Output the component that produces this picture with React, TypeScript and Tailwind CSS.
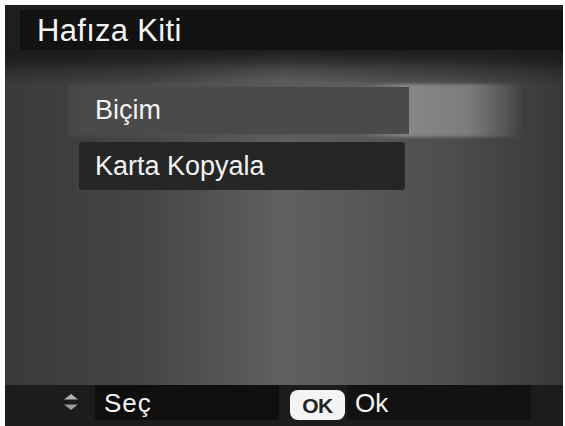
import React from "react";

const font = { fontFamily: '"Liberation Sans", Arial, sans-serif' };

function UpDownIcon() {
  return (
    <svg width="18" height="22" viewBox="0 0 18 22" className="blur-[0.6px]">
      <path d="M2 8.5 L9 3 L16 8.5 Z" fill="#b4b4b4" />
      <path d="M2 13.5 L16 13.5 L9 19 Z" fill="#9c9c9c" />
    </svg>
  );
}

export default function App() {
  return (
    <div className="h-[426px] w-[565px] bg-white pl-[5px] pr-[2px] pt-[5px]" style={font}>
      <div className="flex h-full flex-col bg-[#1c1c1c]">
        {/* header */}
        <div className="flex h-[45px] bg-[#1e1e1e] pl-[15px] pt-[5px]">
          <div className="flex flex-1 items-center bg-[#121212] pl-[17px]">
            <span className="text-[31px] leading-none tracking-[0.3px] text-[#f4f4f4]">Hafıza Kiti</span>
          </div>
        </div>

        {/* body */}
        <div className="relative flex-1 bg-[linear-gradient(to_right,#3a3a3a_0%,#444546_25%,#5f6061_50%,#4c4d4e_80%,#383838_100%)]">
          <div className="pointer-events-none absolute inset-x-0 top-0 h-[34px] bg-gradient-to-b from-[#1c1c1c] via-black/30 to-transparent" />
          <div className="relative flex flex-col pt-[34px]">
            {/* selected item */}
            <div className="relative ml-[63px] h-[53px] w-[455px]">
              <div className="absolute inset-0 rounded-[4px] bg-[linear-gradient(to_right,#464646_0%,#555555_40%,#5e5e5e_65%,#878787_74%,#7c7c7c_88%,transparent_100%)] blur-[1.5px]" />
              <div className="relative ml-[12px] mt-[3px] flex h-[47px] w-[329px] items-center bg-[#4a4a4a] pl-[15px]">
                <span className="text-[27px] leading-none text-[#f2f2f2]">Biçim</span>
              </div>
            </div>
            {/* other item */}
            <div className="ml-[74px] mt-[5px] flex h-[48px] w-[326px] items-center rounded-[3px] bg-[#262626] pl-[16px]">
              <span className="text-[27px] leading-none text-[#f2f2f2]">Karta Kopyala</span>
            </div>
          </div>
        </div>

        {/* footer */}
        <div className="flex h-[41px] items-start bg-[#1c1c1c]">
          <div className="ml-[57px] mt-[6px] flex w-[18px] items-center">
            <UpDownIcon />
          </div>
          <div className="ml-[15px] flex h-[35px] w-[184px] items-center bg-[#0f0f0f] pl-[9px]">
            <span className="text-[26px] leading-none tracking-[1px] text-[#f4f4f4]">Seç</span>
          </div>
          <div className="ml-[11px] mt-[5px] flex h-[30px] w-[55px] items-center justify-center rounded-[8px] bg-[#f4f4f4]">
            <span className="text-[21px] font-black leading-none tracking-[-0.5px] text-[#222]">OK</span>
          </div>
          <div className="ml-[2px] flex h-[35px] w-[184px] items-center bg-[#121212] pl-[8px]">
            <span className="text-[26px] leading-none text-[#f4f4f4]">Ok</span>
          </div>
        </div>
      </div>
    </div>
  );
}
